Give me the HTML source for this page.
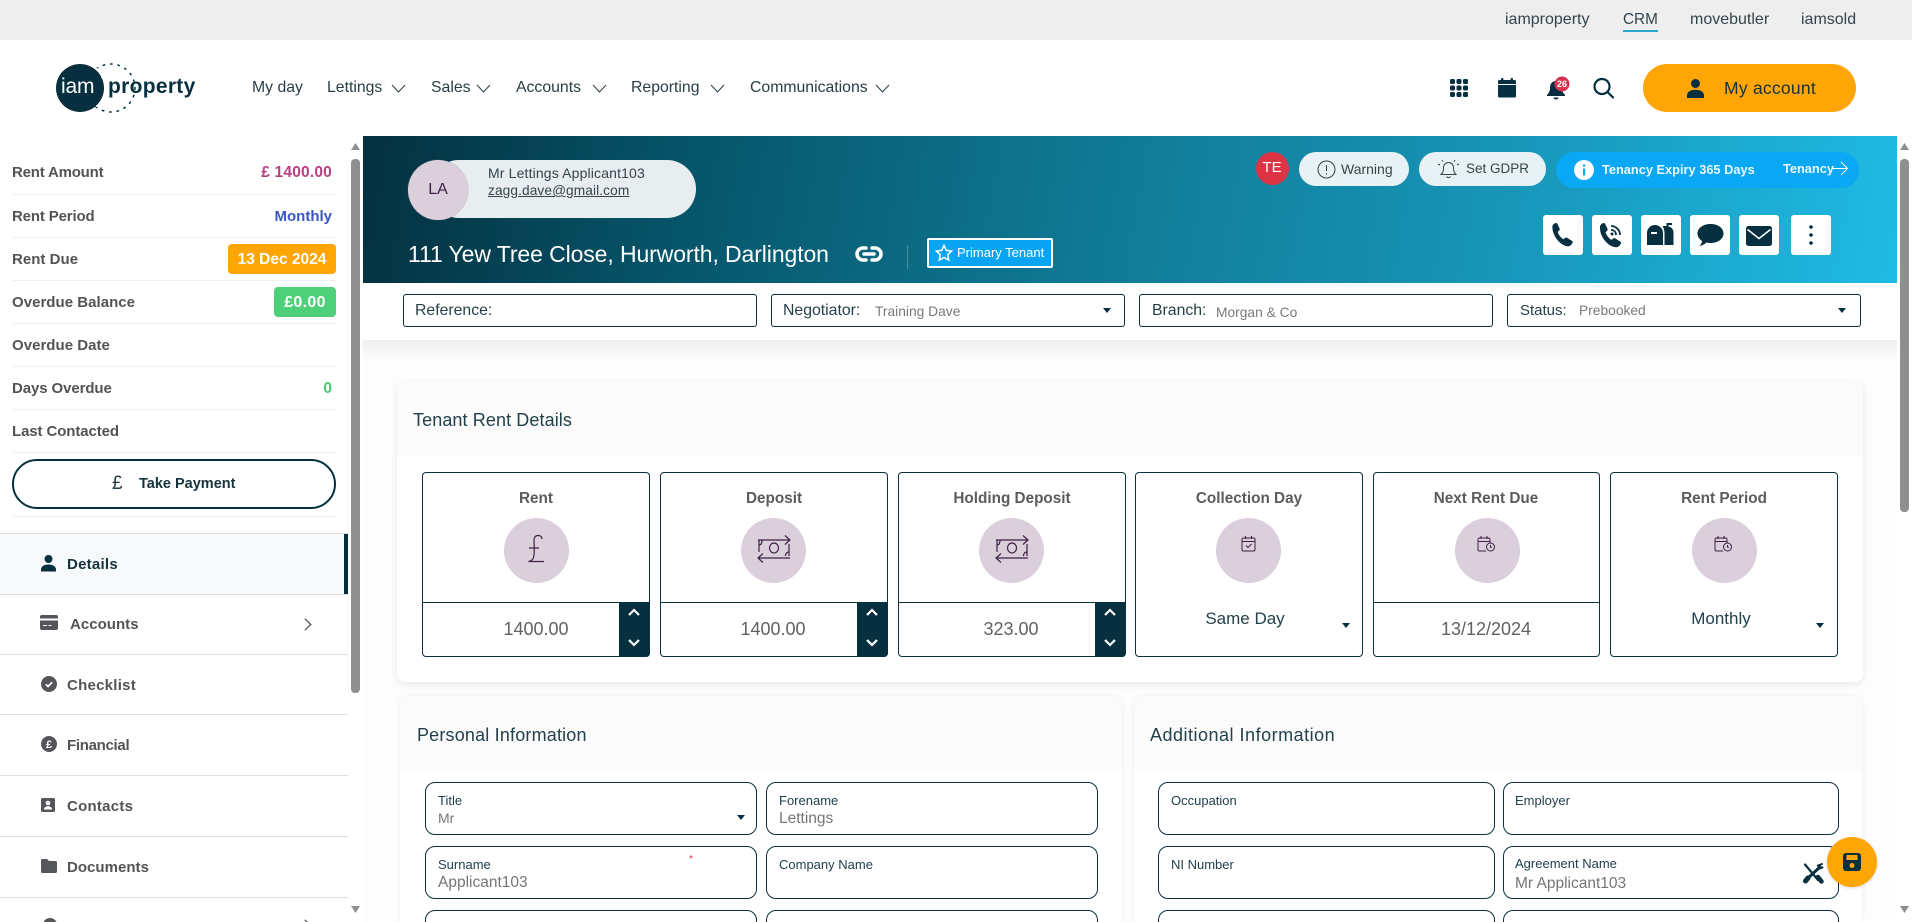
<!DOCTYPE html>
<html lang="en"><head><meta charset="utf-8"><title>iamproperty CRM</title>
<style>
*{box-sizing:border-box}
html,body{margin:0;padding:0;width:1912px;height:922px;overflow:hidden;background:#fff;font-family:"Liberation Sans",sans-serif;color:#06303f}
#p{position:relative;width:1912px;height:922px;overflow:hidden;background:#fff}
.a{position:absolute}
.t{position:absolute;white-space:nowrap;line-height:20px;margin-top:-10px}
.c{transform:translateX(-50%)}
.r{transform:translateX(-100%)}
.nav{font-size:15.8px;color:#2a3c44}
.side{font-size:15px;font-weight:700;color:#525456;letter-spacing:.03px;margin-top:-9.5px}
.ln{position:absolute;height:1px;background:#efefef;left:12px;width:324px}
.ln2{position:absolute;height:1px;background:#dcdee0;left:0;width:348px}
.sv{font-size:15.500px;font-weight:700;margin-top:-9.5px}
.box{position:absolute;top:472px;height:185px;background:#fff;border:1px solid #0b2f3c;border-radius:4px;overflow:hidden}
.lab{font-size:15.300px;font-weight:700;color:#5a5c5e}
.val{font-size:18px;color:#5f6163}
.circ{position:absolute;width:65px;height:65px;border-radius:50%;background:#dccfdc;top:518px}
.spin{position:absolute;top:602px;width:31px;height:55px;background:#06303f;border-radius:0 0 4px 0}
.fld{position:absolute;height:53px;background:#fff;border:1px solid #0b2f3c;border-radius:10px}
.fl{font-size:13px;color:#21404c}
.fv{font-size:15.500px;color:#747678}
.top{position:absolute;height:33px;top:294px;background:#fff;border:1px solid #0b2f3c;border-radius:3px}
.tl{font-size:15.800px;color:#263f49}
.tv{font-size:13.800px;color:#77797b}
.ib{position:absolute;top:215px;width:40px;height:40px;background:#fff;border-radius:3px}
svg{position:absolute;overflow:visible}
</style></head>
<body>
<div id="p">
<!-- top bar -->
<div class="a" style="left:0;top:0;width:1912px;height:40px;background:#eeeeee"></div>
<span class="t" style="left:1505px;top:20px;font-size:16px;color:#33454d">iamproperty</span>
<span class="t" style="left:1623px;top:20px;font-size:15.300px;color:#33454d">CRM</span>
<div class="a" style="left:1623px;top:30px;width:35px;height:2px;background:#2ba6c8"></div>
<span class="t" style="left:1690px;top:20px;font-size:16px;color:#33454d">movebutler</span>
<span class="t" style="left:1801px;top:20px;font-size:16px;color:#33454d">iamsold</span>

<!-- logo -->
<svg style="left:50px;top:60px" width="150" height="56">
<circle cx="61" cy="28" r="24" fill="none" stroke="#06303f" stroke-width="1.500" stroke-dasharray="1.500 6" stroke-linecap="round"/>
<circle cx="30" cy="28" r="24" fill="#06303f"/>
<circle cx="52" cy="17" r="1" fill="#fff"/><circle cx="52" cy="40" r="1" fill="#fff"/><circle cx="47" cy="9" r="1" fill="#fff"/><circle cx="47" cy="46" r="1" fill="#fff"/>
</svg>
<span class="t" style="left:61px;top:87px;font-size:21px;color:#fff;letter-spacing:-.2px">iam</span>
<span class="t" style="left:108px;top:87px;font-size:21px;font-weight:700;color:#06303f;letter-spacing:.3px">property</span>

<!-- nav -->
<span class="t nav" style="left:252px;top:88px">My day</span>
<span class="t nav" style="left:327px;top:88px">Lettings</span>
<span class="t nav" style="left:431px;top:88px">Sales</span>
<span class="t nav" style="left:516px;top:88px">Accounts</span>
<span class="t nav" style="left:631px;top:88px">Reporting</span>
<span class="t nav" style="left:750px;top:88px">Communications</span>
<svg style="left:0;top:0" width="1" height="1" fill="none" stroke="#2a3c44" stroke-width="1">
<path d="M392 85l6.500 7 6.500-7M477 85l6.500 7 6.500-7M593 85l6.500 7 6.500-7M711 85l6.500 7 6.500-7M876 85l6.500 7 6.500-7"/>
</svg>

<!-- header icons -->
<svg style="left:1450px;top:79px" width="18" height="18" fill="#06303f">
<rect x="0" y="0" width="5" height="5" rx="1.500"/><rect x="6.500" y="0" width="5" height="5" rx="1.500"/><rect x="13" y="0" width="5" height="5" rx="1.500"/>
<rect x="0" y="6.500" width="5" height="5" rx="1.500"/><rect x="6.500" y="6.500" width="5" height="5" rx="1.500"/><rect x="13" y="6.500" width="5" height="5" rx="1.500"/>
<rect x="0" y="13" width="5" height="5" rx="1.500"/><rect x="6.500" y="13" width="5" height="5" rx="1.500"/><rect x="13" y="13" width="5" height="5" rx="1.500"/>
</svg>
<svg style="left:1498px;top:78px" width="18" height="20" fill="#06303f">
<rect x="3" y="0" width="2.400" height="4" rx="1"/><rect x="12.600" y="0" width="2.400" height="4" rx="1"/>
<path d="M1.500 2h15A1.500 1.500 0 0 1 18 3.500V6H0V3.500A1.500 1.500 0 0 1 1.500 2zM0 7h18v11a1.500 1.500 0 0 1-1.500 1.500h-15A1.500 1.500 0 0 1 0 18z"/>
</svg>
<svg style="left:1546px;top:76px" width="26" height="24">
<path fill="#06303f" d="M10 5c-4 0-6 3-6 7 0 4-1.500 5-3 7v1h18v-1c-1.500-2-3-3-3-7s-2-7-6-7z"/><path fill="#06303f" d="M7.500 21.500h5a2.500 2 0 0 1-5 0z"/>
<circle cx="16" cy="8" r="7.500" fill="#d8324e"/>
<text x="16" y="11" font-size="9" font-weight="700" fill="#fff" text-anchor="middle" font-family="Liberation Sans">26</text>
</svg>
<svg style="left:1593px;top:78px" width="22" height="21" fill="none" stroke="#06303f" stroke-width="2.200">
<circle cx="9" cy="8.500" r="7.500"/><path d="M14.500 14l5.500 5.500" stroke-linecap="round"/>
</svg>
<div class="a" style="left:1643px;top:64px;width:213px;height:48px;border-radius:24px;background:#ffa505"></div>
<svg style="left:1686px;top:79px" width="20" height="19" fill="#06303f">
<circle cx="9.500" cy="4.500" r="4.500"/><path d="M1 19v-2.500C1 13 4.500 10.800 9.500 10.800S18 13 18 16.500V19z"/>
</svg>
<span class="t" style="left:1724px;top:88px;font-size:17.500px;color:#16323c;letter-spacing:.25px">My account</span>

<!-- sidebar -->
<div class="a" style="left:351px;top:136px;width:9px;height:786px;background:#fff"></div>
<svg style="left:351px;top:143px" width="9" height="8" fill="#8f8f8f"><path d="M4.500 0L9 7H0z"/></svg>
<div class="a" style="left:351px;top:159px;width:9px;height:534px;background:#8f8f8f;border-radius:4px"></div>
<svg style="left:351px;top:906px" width="9" height="8" fill="#8f8f8f"><path d="M0 0h9L4.500 7z"/></svg>

<span class="t side" style="left:12px;top:172px;letter-spacing:-.2px">Rent Amount</span>
<span class="t sv r" style="left:332px;top:172px;color:#b73f82;letter-spacing:.2px">£ 1400.00</span>
<div class="ln" style="top:194px"></div>
<span class="t side" style="left:12px;top:216px;letter-spacing:-.15px">Rent Period</span>
<span class="t sv r" style="left:332px;top:216px;color:#3957c4;font-size:15px">Monthly</span>
<div class="ln" style="top:237px"></div>
<span class="t side" style="left:12px;top:259px">Rent Due</span>
<div class="a" style="left:228px;top:244px;width:108px;height:30px;background:#ffa505;border-radius:4px"></div>
<span class="t sv c" style="left:282px;top:259px;color:#fff;font-size:15.500px">13 Dec 2024</span>
<div class="ln" style="top:280px"></div>
<span class="t side" style="left:12px;top:302px">Overdue Balance</span>
<div class="a" style="left:274px;top:287px;width:62px;height:30px;background:#4ed07a;border-radius:4px"></div>
<span class="t sv c" style="left:305px;top:302px;color:#fff;font-size:16px;letter-spacing:.3px">£0.00</span>
<div class="ln" style="top:323px"></div>
<span class="t side" style="left:12px;top:345px">Overdue Date</span>
<div class="ln" style="top:366px"></div>
<span class="t side" style="left:12px;top:388px;letter-spacing:-.1px">Days Overdue</span>
<span class="t sv r" style="left:332px;top:388px;color:#4ec872">0</span>
<div class="ln" style="top:409px"></div>
<span class="t side" style="left:12px;top:431px;letter-spacing:-.1px">Last Contacted</span>
<div class="ln" style="top:452px"></div>
<div class="a" style="left:12px;top:459px;width:324px;height:50px;border:2px solid #06303f;border-radius:25px;background:#fff"></div>
<span class="t" style="left:112px;top:484px;font-size:19px;color:#2a3c44">£</span>
<span class="t" style="left:139px;top:484px;font-size:14.500px;font-weight:700;color:#16323c">Take Payment</span>
<div class="ln" style="top:516px"></div>

<div class="a" style="left:0;top:534px;width:348px;height:60px;background:#f8f9fc"></div>
<div class="ln2" style="top:533px"></div><div class="ln2" style="top:594px"></div><div class="ln2" style="top:654px"></div><div class="ln2" style="top:714px"></div><div class="ln2" style="top:775px"></div><div class="ln2" style="top:836px"></div><div class="ln2" style="top:897px"></div>
<div class="a" style="left:344px;top:534px;width:4px;height:60px;background:#06303f"></div>

<svg style="left:41px;top:555px" width="15" height="17" fill="#06303f"><circle cx="7.500" cy="4" r="4"/><path d="M0 16.500v-2C0 11.500 3 9.500 7.500 9.500s7.500 2 7.500 5v2z"/></svg>
<span class="t side" style="left:67px;top:564px;color:#16323c;letter-spacing:.25px">Details</span>
<svg style="left:40px;top:615px" width="18" height="15"><path fill="#55565a" d="M2 0h14a2 2 0 0 1 2 2v1.500H0V2a2 2 0 0 1 2-2zM0 5.500h18V13a2 2 0 0 1-2 2H2a2 2 0 0 1-2-2z"/><path stroke="#fff" stroke-width="1" d="M3 10.500h4M8.500 10.500h3"/></svg>
<span class="t side" style="left:70px;top:624px">Accounts</span>
<svg style="left:304px;top:618px" width="8" height="13" fill="none" stroke="#55565a" stroke-width="1.300"><path d="M.8.800l6 5.700-6 5.700"/></svg>
<svg style="left:41px;top:676px" width="16" height="16"><circle cx="8" cy="8" r="8" fill="#55565a"/><path d="M4.800 8.300l2.200 2.200 4.200-4.300" fill="none" stroke="#fff" stroke-width="1.700"/></svg>
<span class="t side" style="left:67px;top:685px;letter-spacing:.25px">Checklist</span>
<svg style="left:41px;top:736px" width="16" height="16"><circle cx="8" cy="8" r="8" fill="#55565a"/><text x="8" y="12" font-size="11" font-weight="700" fill="#fff" text-anchor="middle" font-family="Liberation Sans">£</text></svg>
<span class="t side" style="left:67px;top:745px;letter-spacing:-.3px">Financial</span>
<svg style="left:41px;top:798px" width="14" height="14"><rect width="14" height="14" rx="1.500" fill="#55565a"/><circle cx="7" cy="5" r="2.300" fill="#fff"/><path d="M2.800 11.500c.3-2.300 2-3.300 4.200-3.300s3.900 1 4.200 3.300z" fill="#fff"/></svg>
<span class="t side" style="left:67px;top:806px;letter-spacing:.25px">Contacts</span>
<svg style="left:41px;top:859px" width="16" height="14" fill="#55565a"><path d="M1.500 0H6l2 2h6.500A1.500 1.500 0 0 1 16 3.500v9a1.500 1.500 0 0 1-1.500 1.500h-13A1.500 1.500 0 0 1 0 12.500v-11A1.500 1.500 0 0 1 1.500 0z"/></svg>
<span class="t side" style="left:67px;top:867px">Documents</span>
<svg style="left:43px;top:918px" width="14" height="14" fill="#55565a"><circle cx="7" cy="7" r="7"/></svg>
<span class="t side" style="left:70px;top:929px">Activity</span>
<svg style="left:304px;top:919px" width="8" height="13" fill="none" stroke="#55565a" stroke-width="1.300"><path d="M.8.800l6 5.700-6 5.700"/></svg>

<!-- main bg -->
<div class="a" style="left:363px;top:340px;width:1534px;height:582px;background:#fdfdfd"></div>
<div class="a" style="left:363px;top:340px;width:1534px;height:20px;background:linear-gradient(#efefef,#fdfdfd)"></div>

<!-- banner -->
<div class="a" style="left:363px;top:136px;width:1534px;height:147px;background:linear-gradient(100deg,#04303f 0%,#06566b 22%,#117c98 50%,#1793b5 72%,#1fbbe4 100%)"></div>
<div class="a" style="left:363px;top:283px;width:1534px;height:57px;background:#fff"></div>

<div class="a" style="left:430px;top:160px;width:266px;height:58px;border-radius:29px;background:#e8edf0"></div>
<div class="a" style="left:408px;top:160px;width:60px;height:60px;border-radius:50%;background:#dccfdc;box-shadow:0 0 1px #8a7a8a"></div>
<span class="t c" style="left:438px;top:190px;font-size:16px;color:#3e1f45">LA</span>
<span class="t" style="left:488px;top:173px;font-size:14px;color:#33454d;letter-spacing:.15px">Mr Lettings Applicant103</span>
<span class="t" style="left:488px;top:191px;font-size:13.700px;color:#33454d;text-decoration:underline;letter-spacing:.1px">zagg.dave@gmail.com</span>
<span class="t" style="left:408px;top:254px;font-size:23px;color:#fff;letter-spacing:-.1px">111 Yew Tree Close, Hurworth, Darlington</span>
<svg style="left:855px;top:245px" width="28" height="18" fill="none" stroke="#fff" stroke-width="3.500" stroke-linecap="round">
<path d="M11 3H8a6 6 0 0 0 0 12h3M17 3h3a6 6 0 0 1 0 12h-3M9 9h10"/>
</svg>
<div class="a" style="left:907px;top:245px;width:1px;height:24px;background:#4d8a9c"></div>
<div class="a" style="left:927px;top:238px;width:126px;height:30px;background:#0aa5f2;border:2px solid #fff;border-radius:2px"></div>
<svg style="left:935px;top:244px" width="18" height="18" fill="none" stroke="#fff" stroke-width="1.500"><path d="M9 1.500l2.300 4.900 5.300.7-3.900 3.700 1 5.300L9 13.500l-4.700 2.600 1-5.300-3.900-3.700 5.300-.7z"/></svg>
<span class="t" style="left:957px;top:253px;font-size:13px;color:#fff">Primary Tenant</span>

<!-- badges -->
<div class="a" style="left:1256px;top:152px;width:33px;height:33px;border-radius:50%;background:#dc3345"></div>
<span class="t c" style="left:1272px;top:168px;font-size:15px;color:#fff">TE</span>
<div class="a" style="left:1299px;top:152px;width:110px;height:34px;border-radius:17px;background:#e8f2f6"></div>
<svg style="left:1317px;top:160px" width="19" height="19" fill="none" stroke="#33454d" stroke-width="1"><circle cx="9.500" cy="9.500" r="8.500"/><path d="M9.500 5v6M9.500 13v1.500"/></svg>
<span class="t" style="left:1341px;top:169px;font-size:14px;color:#33454d">Warning</span>
<div class="a" style="left:1419px;top:152px;width:127px;height:34px;border-radius:17px;background:#e8f2f6"></div>
<svg style="left:1437px;top:159px" width="23" height="20" fill="none" stroke="#33454d" stroke-width="1"><path d="M4 15.500c2-2 2.500-3.500 2.500-7a5 5 0 0 1 10 0c0 3.500.5 5 2.500 7zM9.500 17.500c1 1.500 3 1.500 4 0M1 5l2 1M22 5l-2 1M5 1l1 1.500M18 1l-1 1.500"/></svg>
<span class="t" style="left:1466px;top:169px;font-size:13.500px;color:#33454d">Set GDPR</span>
<div class="a" style="left:1556px;top:152px;width:303px;height:36px;border-radius:18px;background:#0aa7f5"></div>
<svg style="left:1574px;top:160px" width="20" height="20"><circle cx="10" cy="10" r="10" fill="#fff"/><rect x="9" y="8.500" width="2.200" height="7" fill="#0aa7f5"/><rect x="9" y="4.500" width="2.200" height="2.200" fill="#0aa7f5"/></svg>
<span class="t" style="left:1602px;top:170px;font-size:12.800px;font-weight:700;color:#e9f8ff">Tenancy Expiry 365 Days</span>
<span class="t" style="left:1783px;top:169px;font-size:12.800px;font-weight:700;color:#e9f8ff">Tenancy</span>
<svg style="left:1833px;top:161px" width="16" height="15" fill="none" stroke="#fff" stroke-width="1"><path d="M0 7.500h14M8 1l6.500 6.500L8 14"/></svg>

<!-- action buttons -->
<div class="ib" style="left:1543px"><svg style="left:7px;top:8px" width="26" height="25" viewBox="1 0 22 26" fill="#06303f"><path d="M1 3.500C1 2 3 0 4.800 0c.7 0 1.100.4 1.500 1.200l2.200 4.600c.3.700.2 1.300-.3 1.800L6.500 9.300c.8 2.600 3 5.800 5.900 7.600l2-1.500c.6-.4 1.200-.4 1.800 0l5 3.100c.8.500 1.100 1.100.8 1.800-.8 2-2.700 4.200-5 4-8-.8-16.500-11.300-16-20.800z"/></svg></div>
<div class="ib" style="left:1592px"><svg style="left:7px;top:7px" width="27" height="29"><path fill="#06303f" d="M1 5C1 3 3 1 4.800 1c.7 0 1.100.4 1.500 1.200l2.200 4.600c.3.700.2 1.300-.3 1.800L6.500 10.300c.8 2.600 3 5.800 5.900 7.600l2-1.500c.6-.4 1.200-.4 1.800 0l5 3.100c.8.500 1.100 1.100.8 1.800-.8 2-2.700 4.200-5 4C8.500 24.500.500 14.500 1 5z"/><path fill="none" stroke="#06303f" stroke-width="1.800" d="M12 8c3 0 5 2 5 5M12 4c5 0 9 4 9 9"/><circle cx="13" cy="12" r="1.500" fill="#06303f"/></svg></div>
<div class="ib" style="left:1641px"><svg style="left:0;top:0" width="40" height="40"><path fill="#06303f" d="M6 18a8 8 0 0 1 16 0v12H6z"/><rect x="10" y="17" width="6" height="2" fill="#fff"/><path fill="#06303f" d="M23.500 30V18c0-3-1-5-2-7h4V8h5.500v2h-3.500v1.500c3 .5 5 3 5 6V30z"/></svg></div>
<div class="ib" style="left:1690px"><svg style="left:7px;top:9px" width="27" height="24" fill="#06303f"><path d="M13.500 0C20.500 0 26.500 3.800 26.500 9.500S20.500 19 13.500 19c-1.500 0-2.800-.2-4-.5-1.500 1.500-4 3-7 3.500 1.300-1.300 2.500-3.500 2.600-5C2.300 15.200.5 12.500.5 9.500.5 3.800 6.500 0 13.500 0z"/></svg></div>
<div class="ib" style="left:1739px"><svg style="left:7px;top:11px" width="27" height="20"><rect width="26" height="20" rx="2.500" fill="#06303f"/><path d="M1.500 3.500L13 12.500l11.500-9" fill="none" stroke="#fff" stroke-width="1.500"/></svg></div>
<div class="ib" style="left:1791px"><svg style="left:18px;top:10px" width="4" height="20" fill="#06303f"><circle cx="2" cy="2" r="1.800"/><circle cx="2" cy="10" r="1.800"/><circle cx="2" cy="18" r="1.800"/></svg></div>

<!-- top fields -->
<div class="top" style="left:403px;width:354px"></div>
<span class="t tl" style="left:415px;top:311px">Reference:</span>
<div class="top" style="left:771px;width:354px"></div>
<span class="t tl" style="left:783px;top:311px">Negotiator:</span>
<span class="t tv" style="left:875px;top:312px">Training Dave</span>
<svg style="left:1103px;top:308px" width="8" height="6" fill="#06303f"><path d="M0 0h8L4 5z"/></svg>
<div class="top" style="left:1139px;width:354px"></div>
<span class="t tl" style="left:1152px;top:311px">Branch:</span>
<span class="t tv" style="left:1216px;top:313px">Morgan &amp; Co</span>
<div class="top" style="left:1507px;width:354px"></div>
<span class="t tl" style="left:1520px;top:311px;font-size:15px">Status:</span>
<span class="t tv" style="left:1579px;top:311px">Prebooked</span>
<svg style="left:1838px;top:308px" width="8" height="6" fill="#06303f"><path d="M0 0h8L4 5z"/></svg>

<!-- rent card -->
<div class="a" style="left:397px;top:382px;width:1466px;height:300px;background:#fff;border-radius:8px;box-shadow:0 2px 8px rgba(0,0,0,.09)"></div>
<div class="a" style="left:397px;top:382px;width:1466px;height:74px;background:#fbfbfb;border-radius:8px 8px 0 0"></div>
<span class="t" style="left:413px;top:420px;font-size:18px;color:#22414d;letter-spacing:.1px">Tenant Rent Details</span>

<div class="box" style="left:422px;width:228px"></div>
<div class="box" style="left:660px;width:228px"></div>
<div class="box" style="left:898px;width:228px"></div>
<div class="box" style="left:1135px;width:228px"></div>
<div class="box" style="left:1373px;width:227px"></div>
<div class="box" style="left:1610px;width:228px"></div>
<div class="a" style="left:422px;top:602px;width:228px;height:1px;background:#0b2f3c"></div>
<div class="a" style="left:660px;top:602px;width:228px;height:1px;background:#0b2f3c"></div>
<div class="a" style="left:898px;top:602px;width:228px;height:1px;background:#0b2f3c"></div>
<div class="a" style="left:1373px;top:602px;width:227px;height:1px;background:#0b2f3c"></div>
<div class="spin" style="left:619px"></div><div class="spin" style="left:857px"></div><div class="spin" style="left:1095px"></div>
<svg style="left:0;top:0" width="1" height="1" fill="none" stroke="#fff" stroke-width="2.200">
<path d="M629 615l5-5 5 5M629 640l5 5 5-5M867 615l5-5 5 5M867 640l5 5 5-5M1105 615l5-5 5 5M1105 640l5 5 5-5"/>
</svg>

<span class="t lab c" style="left:536px;top:499px">Rent</span>
<span class="t lab c" style="left:774px;top:499px">Deposit</span>
<span class="t lab c" style="left:1012px;top:499px">Holding Deposit</span>
<span class="t lab c" style="left:1249px;top:499px">Collection Day</span>
<span class="t lab c" style="left:1486px;top:499px">Next Rent Due</span>
<span class="t lab c" style="left:1724px;top:499px">Rent Period</span>

<div class="circ" style="left:504px"></div><div class="circ" style="left:741px"></div><div class="circ" style="left:979px"></div><div class="circ" style="left:1216px"></div><div class="circ" style="left:1455px"></div><div class="circ" style="left:1692px"></div>

<svg style="left:527px;top:534px" width="18" height="30" fill="none" stroke="#3e1f45" stroke-width="1.200"><path d="M15 5c0-2-1.500-3.500-4-3.500S7 3.500 7 6c0 6 1 12-.5 17.500C5.800 26 4 27 1.500 27.500H17M2 14h10"/></svg>
<svg style="left:756px;top:534px" width="36" height="28" fill="none" stroke="#3e1f45" stroke-width="1.200"><path d="M2 6h32M29 1.500l5 4.500-5 4.500M34 24H2M7 19.500L2 24l5 4.500M3 6v12M33 10v12M3 11c2.500 0 3-2.500 3-5M33 18c-2.500 0-3.500 2-3.500 4"/><ellipse cx="18" cy="14" rx="4.500" ry="5"/></svg>
<svg style="left:994px;top:534px" width="36" height="28" fill="none" stroke="#3e1f45" stroke-width="1.200"><path d="M2 6h32M29 1.500l5 4.500-5 4.500M34 24H2M7 19.500L2 24l5 4.500M3 6v12M33 10v12M3 11c2.500 0 3-2.500 3-5M33 18c-2.500 0-3.500 2-3.500 4"/><ellipse cx="18" cy="14" rx="4.500" ry="5"/></svg>
<svg style="left:1241px;top:535px" width="15" height="17" fill="none" stroke="#3e1f45" stroke-width="1"><rect x="1" y="3" width="13" height="13" rx="1.500"/><path d="M1 6.500h13M4.500 1v3M10.500 1v3M5 10.500l2 2 3.500-3.500"/></svg>
<svg style="left:1477px;top:535px" width="19" height="17" fill="none" stroke="#3e1f45" stroke-width="1"><path d="M9 16H2.500A1.500 1.500 0 0 1 1 14.500v-10A1.500 1.500 0 0 1 2.500 3h9A1.500 1.500 0 0 1 13 4.500V8M1 6.500h12M4 1v3M10 1v3"/><circle cx="13.500" cy="12" r="4"/><path d="M13.500 10v2.200h1.500"/></svg>
<svg style="left:1714px;top:535px" width="19" height="17" fill="none" stroke="#3e1f45" stroke-width="1"><path d="M9 16H2.500A1.500 1.500 0 0 1 1 14.500v-10A1.500 1.500 0 0 1 2.500 3h9A1.500 1.500 0 0 1 13 4.500V8M1 6.500h12M4 1v3M10 1v3"/><circle cx="13.500" cy="12" r="4"/><path d="M13.500 10v2.200h1.500"/></svg>

<span class="t val c" style="left:536px;top:629px">1400.00</span>
<span class="t val c" style="left:773px;top:629px">1400.00</span>
<span class="t val c" style="left:1011px;top:629px">323.00</span>
<span class="t c" style="left:1245px;top:619px;font-size:17px;color:#22414d">Same Day</span>
<span class="t val c" style="left:1486px;top:629px">13/12/2024</span>
<span class="t c" style="left:1721px;top:619px;font-size:17px;color:#22414d">Monthly</span>
<svg style="left:1342px;top:623px" width="8" height="6" fill="#06303f"><path d="M0 0h8L4 5z"/></svg>
<svg style="left:1816px;top:623px" width="8" height="6" fill="#06303f"><path d="M0 0h8L4 5z"/></svg>

<!-- info cards -->
<div class="a" style="left:400px;top:696px;width:722px;height:226px;background:#fff;box-shadow:0 0 6px rgba(0,0,0,.06);border-radius:8px 8px 0 0"></div>
<div class="a" style="left:400px;top:696px;width:722px;height:75px;background:#fbfbfb;border-radius:8px 8px 0 0"></div>
<span class="t" style="left:417px;top:735px;font-size:18px;color:#22414d;letter-spacing:.18px">Personal Information</span>
<div class="a" style="left:1134px;top:696px;width:728px;height:226px;background:#fff;box-shadow:0 0 6px rgba(0,0,0,.06);border-radius:8px 8px 0 0"></div>
<div class="a" style="left:1134px;top:696px;width:728px;height:75px;background:#fbfbfb;border-radius:8px 8px 0 0"></div>
<span class="t" style="left:1150px;top:735px;font-size:18px;color:#22414d;letter-spacing:.5px">Additional Information</span>

<div class="fld" style="left:425px;top:782px;width:332px"></div>
<span class="t fl" style="left:438px;top:801px">Title</span><span class="t fv" style="left:438px;top:818px;font-size:14px">Mr</span>
<svg style="left:737px;top:815px" width="8" height="6" fill="#06303f"><path d="M0 0h8L4 5z"/></svg>
<div class="fld" style="left:766px;top:782px;width:332px"></div>
<span class="t fl" style="left:779px;top:801px">Forename</span><span class="t fv" style="left:779px;top:819px">Lettings</span>
<div class="fld" style="left:425px;top:846px;width:332px"></div>
<span class="t fl" style="left:438px;top:865px">Surname</span><span class="t fv" style="left:438px;top:883px">Applicant103</span>
<span class="t" style="left:689px;top:860px;font-size:10px;color:#dc3345">*</span>
<div class="fld" style="left:766px;top:846px;width:332px"></div>
<span class="t fl" style="left:779px;top:865px">Company Name</span>
<div class="fld" style="left:425px;top:910px;width:332px"></div>
<div class="fld" style="left:766px;top:910px;width:332px"></div>

<div class="fld" style="left:1158px;top:782px;width:337px"></div>
<span class="t fl" style="left:1171px;top:801px">Occupation</span>
<div class="fld" style="left:1503px;top:782px;width:336px"></div>
<span class="t fl" style="left:1515px;top:801px">Employer</span>
<div class="fld" style="left:1158px;top:846px;width:337px"></div>
<span class="t fl" style="left:1171px;top:865px">NI Number</span>
<div class="fld" style="left:1503px;top:846px;width:336px"></div>
<span class="t fl" style="left:1515px;top:864px">Agreement Name</span><span class="t fv" style="left:1515px;top:884px">Mr Applicant103</span>
<div class="fld" style="left:1158px;top:910px;width:337px"></div>
<div class="fld" style="left:1503px;top:910px;width:336px"></div>

<svg style="left:1802px;top:863px" width="22" height="21" fill="none" stroke="#06303f" stroke-linecap="round">
<path d="M3 1.500L16 17" stroke-width="2.200"/><path d="M16 14l3.500 4.500" stroke-width="4.500"/><path d="M18 4L6 15" stroke-width="3"/><path d="M6 15l-2.500 3" stroke-width="5"/><path d="M20 1l-4 1.500 1.500 3 3-1" stroke-width="2"/>
</svg>
<div class="a" style="left:1827px;top:837px;width:50px;height:50px;border-radius:50%;background:#ffa505;box-shadow:0 1px 3px rgba(0,0,0,.15)"></div>
<svg style="left:1843px;top:853px" width="18" height="18"><rect width="18" height="18" rx="3" fill="#06303f"/><rect x="3.500" y="2" width="11" height="5" fill="#ffa505"/><circle cx="9" cy="12.500" r="2.500" fill="#ffa505"/></svg>

<!-- main scrollbar -->
<svg style="left:1900px;top:143px" width="9" height="8" fill="#8f8f8f"><path d="M4.500 0L9 7H0z"/></svg>
<div class="a" style="left:1900px;top:159px;width:9px;height:353px;background:#8f8f8f;border-radius:4px"></div>
<svg style="left:1900px;top:906px" width="9" height="8" fill="#8f8f8f"><path d="M0 0h9L4.500 7z"/></svg>
</div>
</body></html>
